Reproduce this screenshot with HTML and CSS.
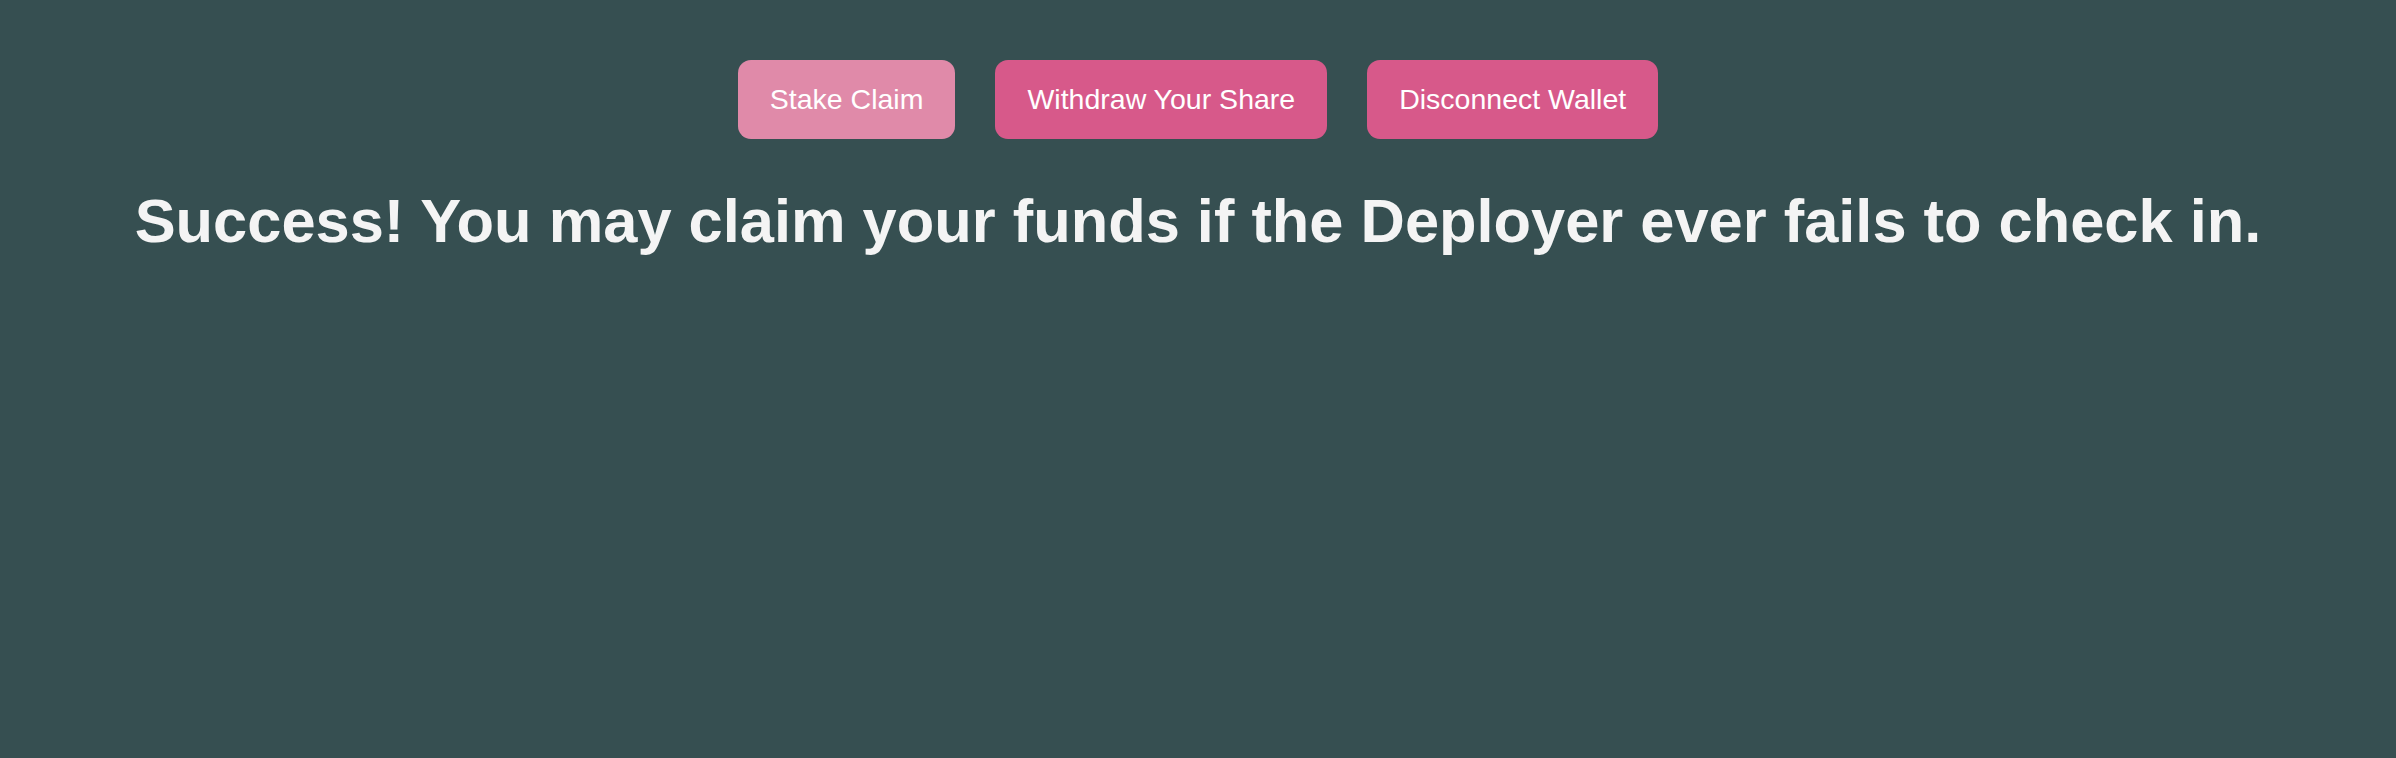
FILE: index.html
```html
<!DOCTYPE html>
<html lang="en">
<head>
<meta charset="utf-8">
<title>Claim</title>
<link rel="stylesheet" href="styles.css">
</head>
<body>
<main class="page">
  <div class="actions">
    <button class="btn btn-light" type="button">Stake Claim</button>
    <button class="btn" type="button">Withdraw Your Share</button>
    <button class="btn" type="button">Disconnect Wallet</button>
  </div>
  <h1 class="message">Success! You may claim your funds if the Deployer ever fails to check in.</h1>
</main>
</body>
</html>
```

FILE: styles.css
```css
html, body {
  margin: 0;
  padding: 0;
  background: #364f51;
  height: 100%;
}

.page {
  display: flex;
  flex-direction: column;
  align-items: center;
  padding-top: 60px;
}

.actions {
  display: flex;
  gap: 40px;
}

.btn {
  height: 79px;
  padding: 0 32px;
  border: none;
  border-radius: 13px;
  background: #d7598a;
  color: #ffffff;
  font-family: "Liberation Sans", Arial, sans-serif;
  font-size: 28.5px;
  font-weight: 400;
  cursor: pointer;
}

.btn-light {
  background: #e08aa9;
}

.message {
  margin: 45px 0 0;
  font-family: "Liberation Sans", Arial, sans-serif;
  font-size: 61.4px;
  line-height: 1.2;
  font-weight: 700;
  color: #f4f4f4;
  text-align: center;
}
```
